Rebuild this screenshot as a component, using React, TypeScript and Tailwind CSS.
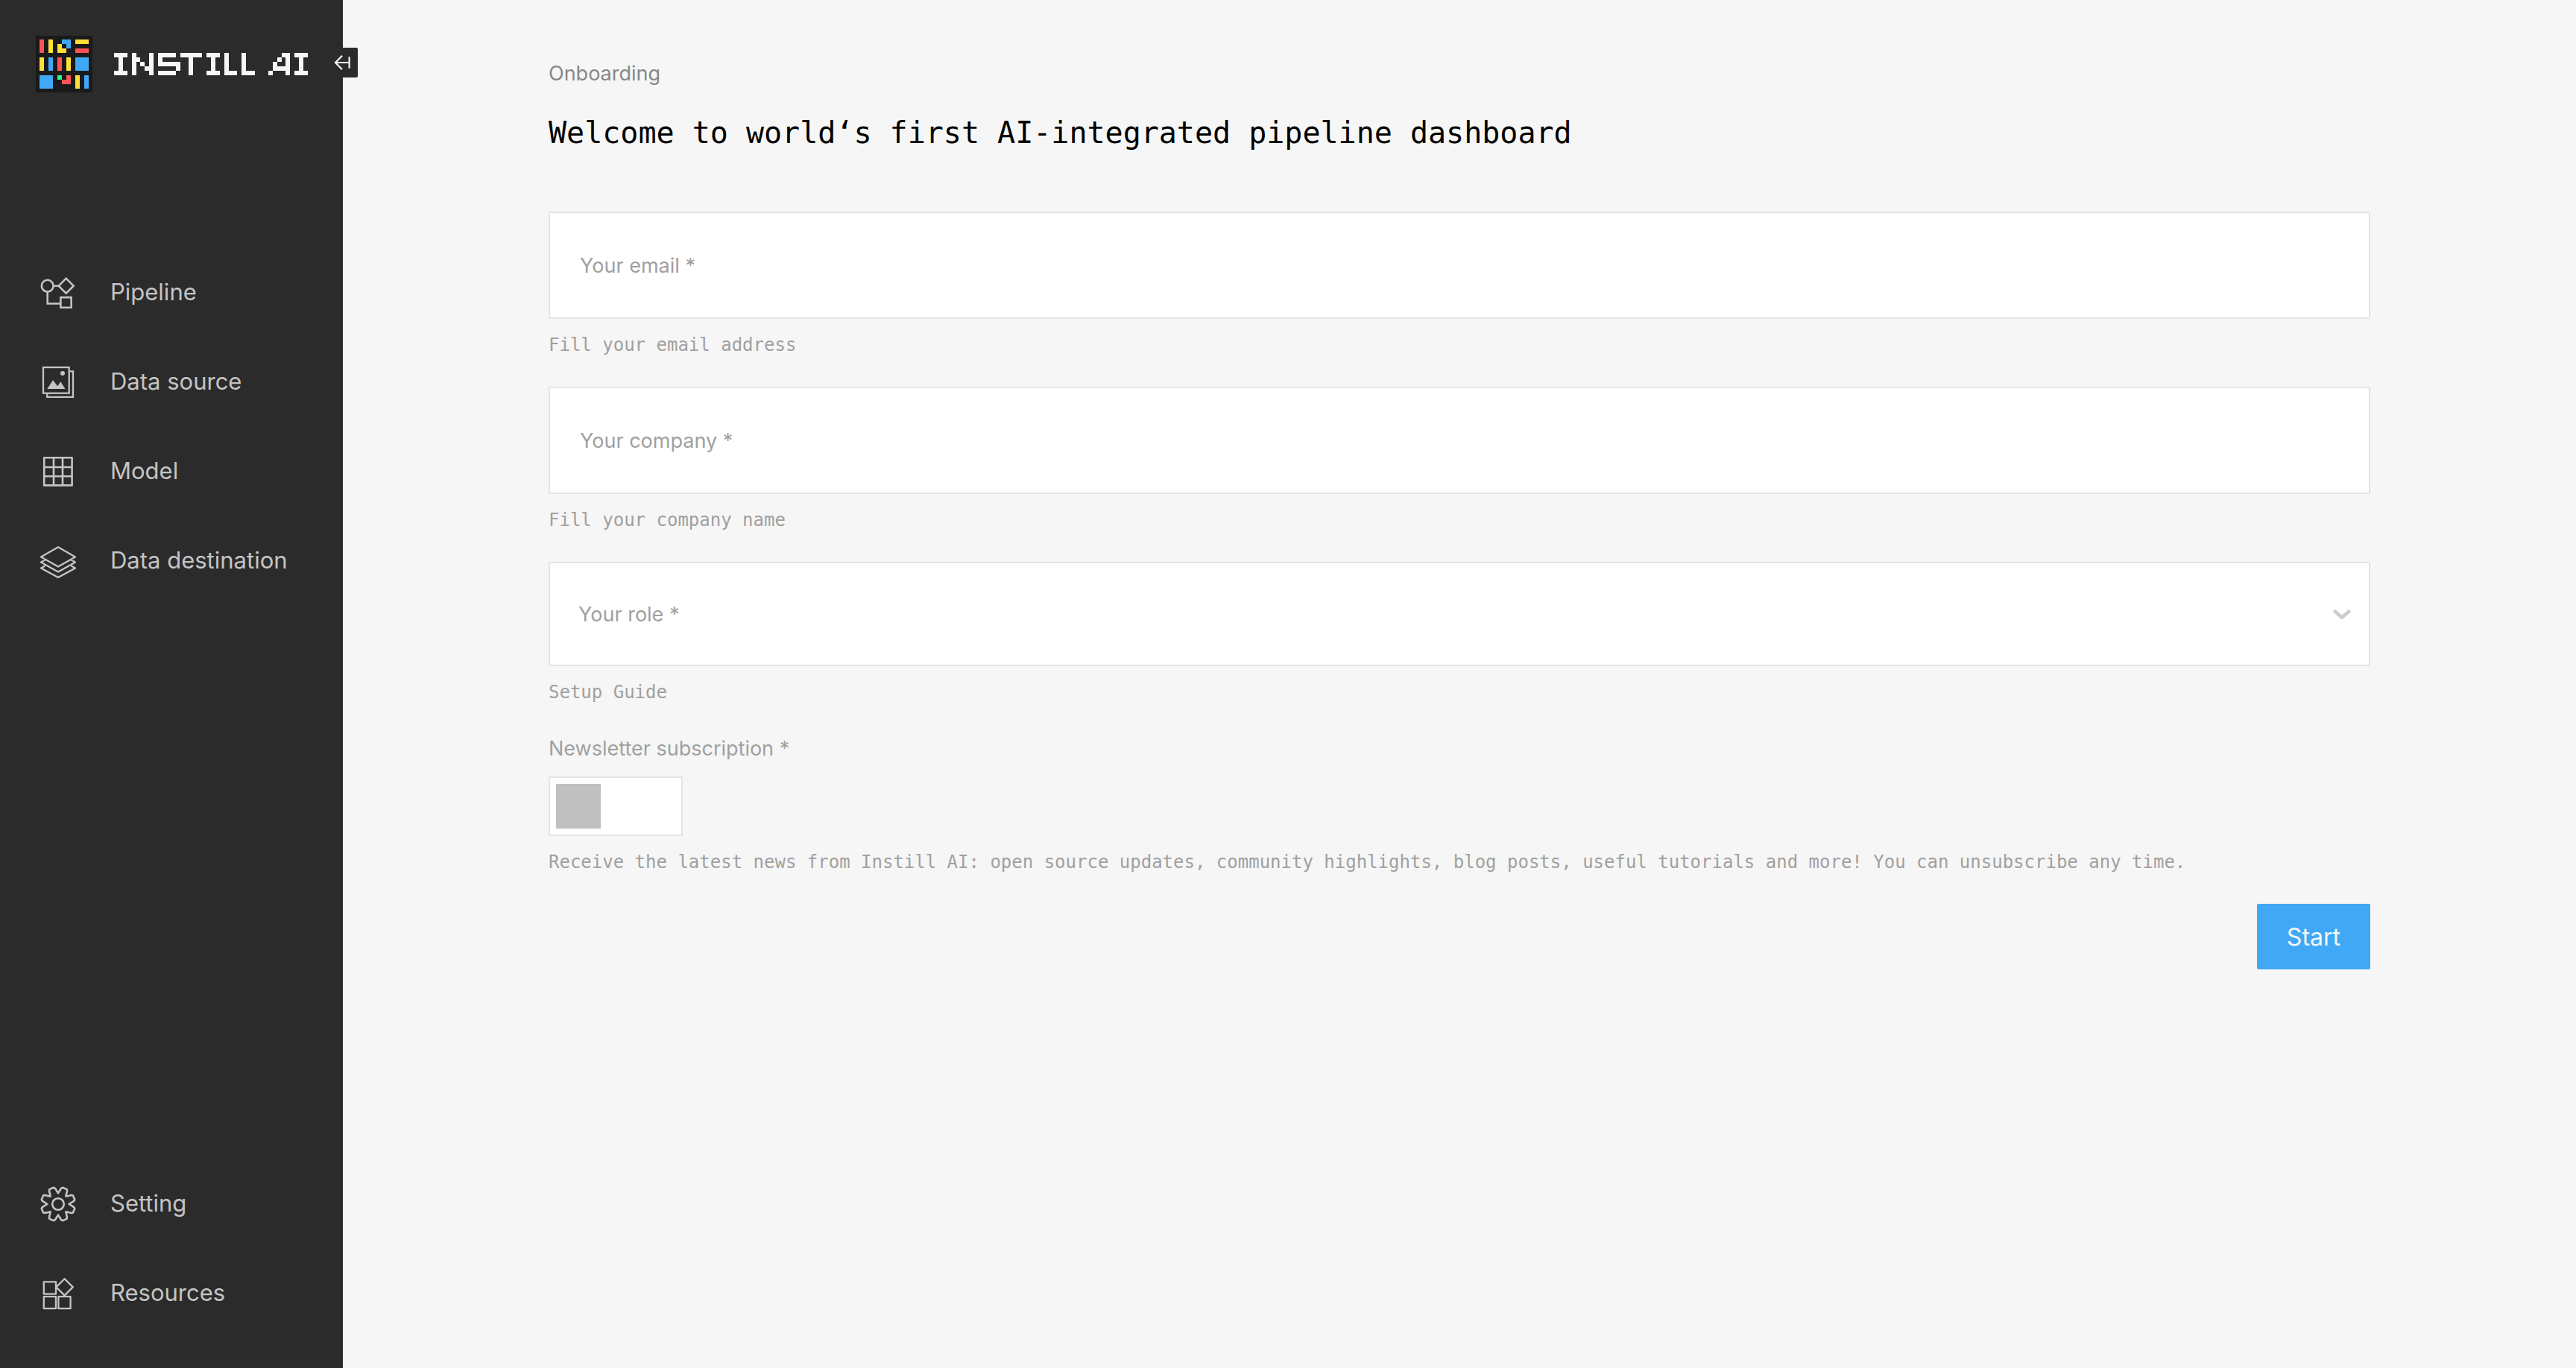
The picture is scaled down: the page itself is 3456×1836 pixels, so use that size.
import { useState, type ReactNode } from "react";

const LOGO_BLOCKS: [number, number, number, number, string][] = [
  [0, 0, 1, 3, "#ff5353"],
  [2, 0, 1, 3, "#ffdf38"],
  [5, 0, 2, 1, "#40a8f5"],
  [6, 1, 1, 1, "#40a8f5"],
  [4, 1, 1, 2, "#ffdf38"],
  [5, 2, 1, 1, "#ffdf38"],
  [8, 0, 3, 1, "#ffdf38"],
  [8, 2, 3, 1, "#ff5353"],
  [0, 4, 1, 3, "#ffdf38"],
  [2, 4, 1, 3, "#40a8f5"],
  [4, 4, 1, 3, "#ff5353"],
  [6, 4, 1, 3, "#ffdf38"],
  [8, 4, 3, 3, "#40a8f5"],
  [0, 8, 3, 3, "#40a8f5"],
  [4, 8, 1, 1, "#2bf57e"],
  [6, 8, 1, 1, "#ff5353"],
  [5, 9, 2, 1, "#ff5353"],
  [8, 8, 1, 3, "#ffdf38"],
  [10, 8, 1, 3, "#40a8f5"],
];

// Pixel-art logo lettering, one string per row of blocks.
const WORDMARK_ROWS = [
  "###.#...#.####.#####.###.#...#........##.###",
  ".#..##..#.#......#....#..#...#.......#.#..#.",
  ".#..#.#.#.#####..#....#..#...#......#..#..#.",
  ".#..#..##.....#..#....#..#...#......####..#.",
  "###.#...#.####...#...###.###.###...#...#.###",
];

function LogoMark() {
  return (
    <svg className="size-19 shrink-0" viewBox="0 0 76 76" aria-hidden="true" shapeRendering="crispEdges">
      <rect width="76" height="76" fill="#1a1a1a" />
      <g transform="translate(5.4 5.4) scale(5.93)">
        {LOGO_BLOCKS.map(([x, y, w, h, fill], i) => (
          <rect key={i} x={x} y={y} width={w} height={h} fill={fill} />
        ))}
      </g>
    </svg>
  );
}

function Wordmark() {
  return (
    <svg className="h-[30px] w-[260px] shrink-0" viewBox="0 0 44 5" preserveAspectRatio="none" role="img" aria-label="Instill AI" fill="#f6f6f6" shapeRendering="crispEdges">
      {WORDMARK_ROWS.flatMap((row, y) =>
        [...row].map((c, x) => (c === "#" ? <rect key={`${x}-${y}`} x={x} y={y} width="1" height="1" /> : null)),
      )}
    </svg>
  );
}

function Icon({ children, width = 2.3 }: { children: ReactNode; width?: number }) {
  return (
    <svg className="size-12 shrink-0" viewBox="0 0 48 48" fill="none" stroke="currentColor" strokeWidth={width} aria-hidden="true">
      {children}
    </svg>
  );
}

function gearPath() {
  const points: string[] = [];
  const add = (deg: number, r: number) => {
    const a = (deg * Math.PI) / 180;
    points.push(`${(24 + r * Math.sin(a)).toFixed(2)} ${(24 - r * Math.cos(a)).toFixed(2)}`);
  };
  for (let k = 0; k < 8; k++) {
    add(k * 45, 14.6);
    add(k * 45 + 11, 21.6);
    add(k * 45 + 15, 23);
    add(k * 45 + 30, 23);
    add(k * 45 + 34, 21.6);
  }
  return `M${points.join("L")}Z`;
}

const pipelineIcon = (
  <Icon width={2.6}>
    <circle cx="9.7" cy="14.7" r="7.9" />
    <path d="M17.6 14.7H24.6M34.7 4.7L44.7 14.7L34.7 24.7L24.7 14.7ZM9.7 22.6V38.5H27.4M27.4 30.1H41.6V43.7H27.4Z" />
  </Icon>
);

const sourceIcon = (
  <Icon>
    <rect x="4" y="4" width="34.7" height="34.7" />
    <path d="M39.7 9.3H44V43.8H9.3V39.7" />
    <circle cx="30" cy="12" r="3" fill="currentColor" stroke="none" />
    <path d="M9.3 33L17 21.3L23.3 29.3L27.3 23.3L33.5 33Z" fill="currentColor" stroke="none" />
  </Icon>
);

const modelIcon = (
  <Icon width={2.6}>
    <path d="M5.2 5.2H42.6V42.4H5.2ZM18 5V42.4M30 5V42.4M5 18H42.6M5 30.2H42.6" strokeLinejoin="round" />
  </Icon>
);

const destinationIcon = (
  <Icon>
    <path
      d="M24 5.2L47 18.4L24 31.4L1 18.4ZM6.6 22.4L1 25.6L24 38.6L47 25.6L41.4 22.4M6.6 30.2L1 33.4L24 46L47 33.4L41.4 30.2"
      strokeLinejoin="round"
    />
  </Icon>
);

const settingIcon = (
  <Icon width={2.6}>
    <circle cx="24" cy="24" r="7.8" />
    <path d={gearPath()} strokeLinejoin="round" />
  </Icon>
);

const resourcesIcon = (
  <Icon>
    <path d="M4.8 8.4H21V24.6H4.8ZM4.8 28.2H21V44.2H4.8ZM24.4 28.2H40.6V44.2H24.4ZM32.6 4.2L43.8 15.4L32.6 26.6L21.4 15.4Z" strokeLinejoin="round" />
  </Icon>
);

function NavLink({ icon, label }: { icon: ReactNode; label: string }) {
  return (
    <a href="#" className="flex items-start gap-[46px] text-[31px] leading-[46px] text-[#c4c4c4]">
      {icon}
      <span>{label}</span>
    </a>
  );
}

function Sidebar() {
  return (
    <aside className="relative flex w-[460px] shrink-0 flex-col bg-[#2b2b2b] px-[54px] pt-12 pb-19">
      <a href="#" className="-ml-1.5 flex items-center gap-[29px]">
        <LogoMark />
        <Wordmark />
      </a>
      <button
        type="button"
        aria-label="Collapse sidebar"
        className="absolute top-16 -right-5 flex size-10 items-center justify-center rounded-r-xs bg-[#2b2b2b]"
      >
        <svg className="size-10" viewBox="0 0 40 40" fill="none" stroke="#f6f6f6" strokeWidth="2.2" aria-hidden="true">
          <path d="M19 10.8L10 20L19 29.2M10 20H28.6M28.6 12.2V27.8" />
        </svg>
      </button>
      <nav className="flex grow flex-col gap-18 pt-[245px]">
        <NavLink icon={pipelineIcon} label="Pipeline" />
        <NavLink icon={sourceIcon} label="Data source" />
        <NavLink icon={modelIcon} label="Model" />
        <NavLink icon={destinationIcon} label="Data destination" />
      </nav>
      <nav className="flex flex-col gap-18">
        <NavLink icon={settingIcon} label="Setting" />
        <NavLink icon={resourcesIcon} label="Resources" />
      </nav>
    </aside>
  );
}

function Help({ id, children }: { id: string; children: ReactNode }) {
  return (
    <p id={id} className="mt-5 font-['DejaVu_Sans_Mono',monospace] text-[24px] leading-[31px] text-[#a0a0a0]">
      {children}
    </p>
  );
}

function TextField({ id, type, label, help }: { id: string; type: string; label: string; help: string }) {
  const [value, setValue] = useState("");
  return (
    <div>
      <div className="relative">
        <input
          id={id}
          type={type}
          required
          value={value}
          onChange={(e) => setValue(e.target.value)}
          aria-describedby={`${id}-help`}
          className="block h-36 w-full rounded-xs border-2 border-[#e4e4e4] bg-white px-10 pt-8 text-[27px] text-[#2b2b2b] outline-none"
        />
        <label
          htmlFor={id}
          className={`pointer-events-none absolute left-[42px] text-[27px] leading-[39px] text-[#a0a0a0] ${value ? "top-4" : "top-[53px]"}`}
        >
          {label}
        </label>
      </div>
      <Help id={`${id}-help`}>{help}</Help>
    </div>
  );
}

function RoleField() {
  const [role, setRole] = useState("");
  return (
    <div>
      <div className="relative">
        <select
          id="role"
          required
          value={role}
          onChange={(e) => setRole(e.target.value)}
          aria-describedby="role-help"
          className="block h-35 w-full appearance-none rounded-xs border-2 border-[#e4e4e4] bg-white px-10 pt-8 text-[27px] text-[#2b2b2b] outline-none"
        >
          <option value="" />
          <option value="engineer">Engineer</option>
          <option value="manager">Manager</option>
        </select>
        <label
          htmlFor="role"
          className={`pointer-events-none absolute left-10 text-[27px] leading-[39px] text-[#a0a0a0] ${role ? "top-4" : "top-[51px]"}`}
        >
          Your role *
        </label>
        <svg
          className="pointer-events-none absolute top-[51px] right-[18px] size-10"
          viewBox="0 0 40 40"
          fill="none"
          stroke="#cccccc"
          strokeWidth="4.6"
          strokeLinecap="round"
          strokeLinejoin="round"
          aria-hidden="true"
        >
          <path d="M10.6 15.6L20 23.8L29.4 15.6" />
        </svg>
      </div>
      <Help id="role-help">Setup Guide</Help>
    </div>
  );
}

function NewsletterField() {
  return (
    <div>
      <label htmlFor="newsletter" className="block text-[27px] leading-[39px] text-[#a0a0a0]">
        Newsletter subscription *
      </label>
      <div className="relative mt-[18px] h-20 w-45">
        <input
          id="newsletter"
          type="checkbox"
          role="switch"
          aria-describedby="newsletter-help"
          className="peer block size-full appearance-none border-2 border-[#e4e4e4] bg-white"
        />
        <span className="pointer-events-none absolute top-2.5 left-2.5 size-15 bg-[#c0c0c0] peer-checked:right-2.5 peer-checked:left-auto peer-checked:bg-[#40a8f5]" />
      </div>
      <Help id="newsletter-help">
        Receive the latest news from Instill AI: open source updates, community highlights, blog posts, useful tutorials
        and more! You can unsubscribe any time.
      </Help>
    </div>
  );
}

export default function App() {
  return (
    <div className="flex min-h-screen bg-[#f6f6f6] font-['Inter',sans-serif]">
      <Sidebar />
      <main className="min-w-0 grow px-[276px] pt-[79px] pb-20">
        <p className="text-[27px] leading-10 text-[#888888]">Onboarding</p>
        <h1 className="mt-[31px] font-['DejaVu_Sans_Mono',monospace] text-[40px] leading-14 text-black">
          Welcome to world‘s first AI-integrated pipeline dashboard
        </h1>
        <form className="mt-[78px] flex flex-col gap-10" onSubmit={(e) => e.preventDefault()}>
          <TextField id="email" type="email" label="Your email *" help="Fill your email address" />
          <TextField id="company" type="text" label="Your company *" help="Fill your company name" />
          <RoleField />
          <NewsletterField />
          <button
            type="submit"
            className="self-end rounded-xs bg-[#40a8f5] px-10 pt-[21px] pb-[19px] text-[32px] leading-12 text-[#f6f6f6]"
          >
            Start
          </button>
        </form>
      </main>
    </div>
  );
}
